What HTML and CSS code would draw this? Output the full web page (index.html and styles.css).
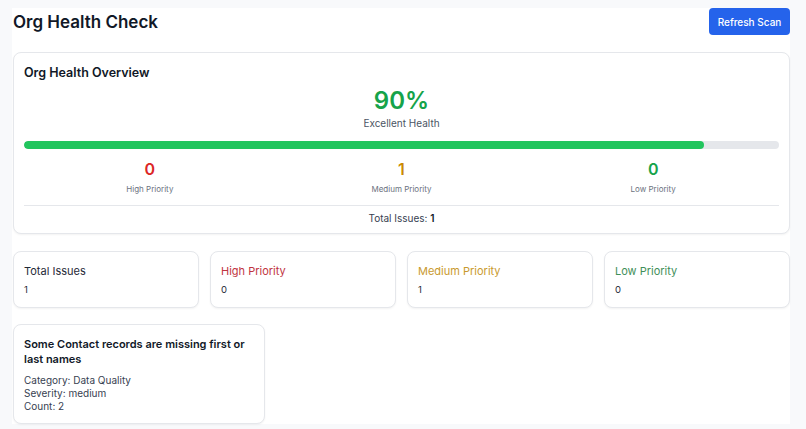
FILE: index.html
```html
<!DOCTYPE html>
<html>
<head>
<meta charset="utf-8">
<link rel="stylesheet" href="styles.css">
</head>
<body>
<div class="page">
  <header class="header">
    <h1 class="title">Org Health Check</h1>
    <button class="btn">Refresh Scan</button>
  </header>

  <section class="card overview">
    <h2 class="card-title">Org Health Overview</h2>
    <div class="score">90%</div>
    <div class="score-label">Excellent Health</div>
    <div class="bar"><div class="bar-fill" style="width:90%"></div></div>
    <div class="counts">
      <div class="count"><div class="num red">0</div><div class="count-label">High Priority</div></div>
      <div class="count"><div class="num amber">1</div><div class="count-label">Medium Priority</div></div>
      <div class="count"><div class="num green">0</div><div class="count-label">Low Priority</div></div>
    </div>
    <div class="total">Total Issues: <b>1</b></div>
  </section>

  <section class="stats">
    <div class="card stat"><div class="stat-label">Total Issues</div><div class="stat-value">1</div></div>
    <div class="card stat"><div class="stat-label red-soft">High Priority</div><div class="stat-value">0</div></div>
    <div class="card stat"><div class="stat-label amber-soft">Medium Priority</div><div class="stat-value">1</div></div>
    <div class="card stat"><div class="stat-label green-soft">Low Priority</div><div class="stat-value">0</div></div>
  </section>

  <section class="issues">
    <div class="card issue">
      <h3 class="issue-title">Some Contact records are missing first or last names</h3>
      <div class="issue-meta">
        <div>Category: Data Quality</div>
        <div>Severity: medium</div>
        <div>Count: 2</div>
      </div>
    </div>
  </section>
</div>
</body>
</html>
```
FILE: styles.css
```css
* { box-sizing: border-box; }
html, body { margin: 0; padding: 0; }
body {
  background: #f8f9fb;
  font-family: Inter, "Open Sans", sans-serif;
  color: #111827;
  width: 806px;
  height: 429px;
  overflow: hidden;
}
.page {
  margin: 8px 16px 0 12px;
  background: #ffffff;
  height: 416px;
  display: flex;
  flex-direction: column;
}
.header {
  display: flex;
  justify-content: space-between;
  align-items: center;
  height: 27px;
}
.title {
  margin: 0 0 0 1px;
  font-size: 17px;
  font-weight: 600;
  color: #111827;
}
.btn {
  width: 81px;
  height: 27px;
  border: none;
  border-radius: 4px;
  background: #2563eb;
  color: #fff;
  font-family: inherit;
  font-size: 10px;
  font-weight: 500;
  padding: 0;
}
.card {
  background: #fff;
  border: 1px solid #e5e7eb;
  border-radius: 8px;
  box-shadow: 0 1px 2px rgba(0,0,0,0.05);
}
.overview {
  margin: 17px 0 0 1px;
  padding: 10px 10px 10px 10px;
  height: 182px;
}
.card-title {
  margin: 0;
  font-size: 12.5px;
  line-height: 20px;
  font-weight: 600;
}
.score {
  margin-top: 3px;
  text-align: center;
  font-size: 24px;
  line-height: 30px;
  font-weight: 600;
  color: #16a34a;
}
.score-label {
  text-align: center;
  font-size: 10px;
  line-height: 14px;
  color: #4b5563;
}
.bar {
  margin-top: 11px;
  height: 8px;
  border-radius: 4px;
  background: #e5e7eb;
  overflow: hidden;
}
.bar-fill {
  height: 100%;
  background: #22c55e;
  border-radius: 4px;
}
.counts {
  margin-top: 10px;
  display: grid;
  grid-template-columns: repeat(3, 1fr);
  padding-bottom: 10px;
  border-bottom: 1px solid #e5e7eb;
}
.count { text-align: center; }
.num {
  font-size: 16px;
  line-height: 20px;
  font-weight: 600;
}
.count-label {
  margin-top: 4px;
  font-size: 8px;
  line-height: 12px;
  color: #6b7280;
}
.red { color: #dc2626; }
.amber { color: #ca8a04; }
.green { color: #16a34a; }
.total {
  padding-top: 5px;
  text-align: center;
  font-size: 10px;
  line-height: 14px;
  color: #374151;
}
.total b { font-weight: 600; color: #111827; }
.stats {
  margin: 17px 0 0 1px;
  display: grid;
  grid-template-columns: repeat(4, 1fr);
  gap: 11px;
}
.stat {
  height: 57px;
  padding: 11px 10px 0;
}
.stat-label {
  font-size: 11px;
  line-height: 16px;
  color: #1f2937;
}
.stat-value {
  margin-top: 4px;
  font-size: 9.5px;
  line-height: 14px;
  color: #1f2937;
}
.red-soft { color: #c0343f; }
.amber-soft { color: #c99a2e; }
.green-soft { color: #3f8f5a; }
.issues {
  margin: 16px 0 0 1px;
  display: grid;
  grid-template-columns: repeat(3, 1fr);
  gap: 11px;
}
.issue {
  height: 100px;
  padding: 12px 10px 0;
}
.issue-title {
  margin: 0;
  font-size: 11px;
  line-height: 15px;
  font-weight: 600;
}
.issue-meta {
  margin-top: 7px;
  font-size: 10px;
  line-height: 13px;
  color: #374151;
}
```
